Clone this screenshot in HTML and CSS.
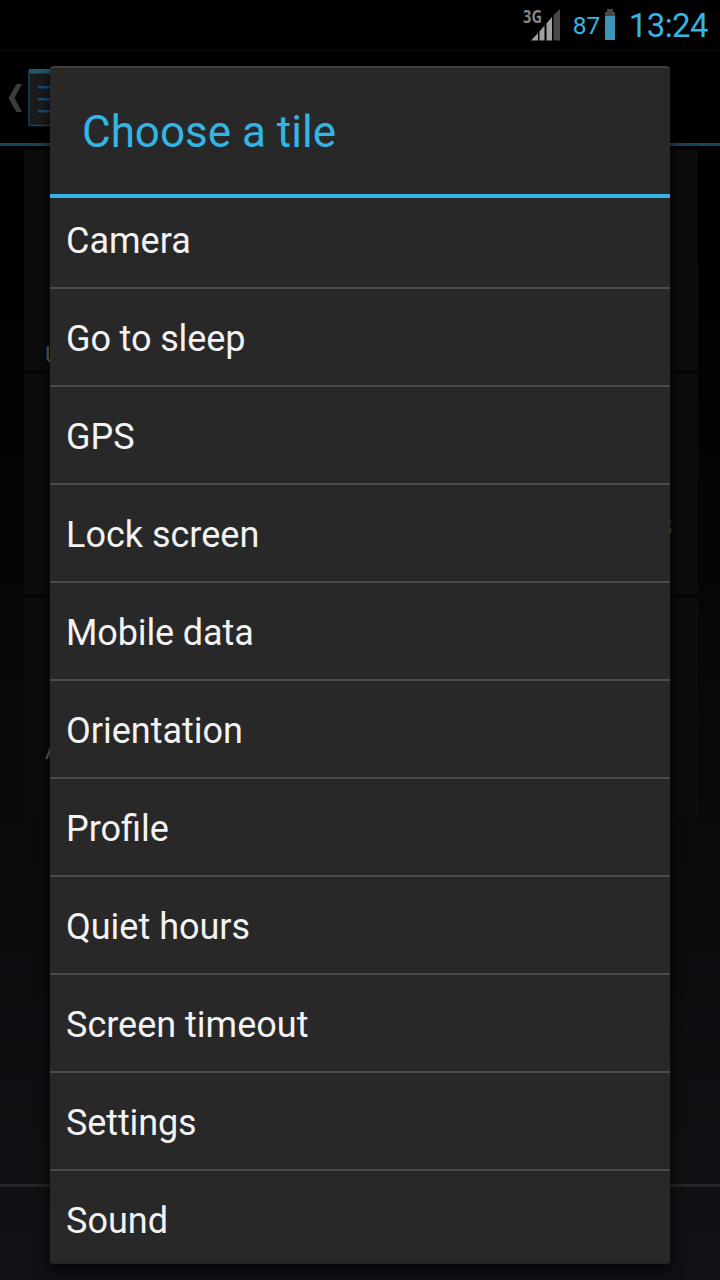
FILE: index.html
```html
<!DOCTYPE html>
<html lang="en">
<head>
<meta charset="utf-8">
<title>Choose a tile</title>
<link rel="stylesheet" href="styles.css">
</head>
<body>
<div class="screen">
  <header class="status">
    <svg class="signal" width="40" height="36" viewBox="0 0 40 36">
      <text x="0" y="17" class="net" textLength="19" lengthAdjust="spacingAndGlyphs">3G</text>
      <path fill="#a0a0a0" d="M8 34.500 15 27V34.500ZM16.500 25.500 21.500 19.500V34.500H16.500ZM23.500 17.500 29 11V34.500H23.500Z"/>
      <path fill="#484848" d="M30.500 9 37 3V34.500H30.500Z"/>
    </svg>
    <span class="percent">87</span>
    <svg class="battery" width="10" height="31" viewBox="0 0 10 31">
      <path fill="#484848" d="M2 0H8V3H10V7H0V3H2Z"/>
      <path fill="#3d94b7" d="M0 7H10V31H0Z"/>
    </svg>
    <span class="clock">13:24</span>
  </header>
  <div class="actionbar">
    <svg class="back" width="14" height="28" viewBox="0 0 14 28"><path fill="#3c3c3c" d="M8.500 0H14L6.500 14 14 28H8.500L.5 14Z"/></svg>
    <svg class="appicon" width="50" height="58" viewBox="0 0 50 58">
      <rect x="1" y="1" width="48" height="55.500" rx="1" fill="#1b1b1b" stroke="#17455f" stroke-width="1.500"/>
      <path fill="#22586e" d="M1 0H49V4H1Z"/>
      <path fill="#353535" d="M2 4H49V5H2Z"/>
      <path fill="#1b4f78" d="M10 17H40V19.500H10ZM10 29H40V31.500H10ZM10 41H40V43.500H10Z"/>
    </svg>
  </div>
  <main class="tiles">
    <div class="tile"><span class="tile-label">U</span></div>
    <div class="tile middle"><span class="tile-label">S</span></div>
    <div class="tile"><span class="tile-label low">A</span></div>
  </main>
  <footer class="bottombar"></footer>
  <section class="dialog">
    <h1 class="title">Choose a tile</h1>
    <ul class="list">
      <li class="item first">Camera</li>
      <li class="item snug">Go to sleep</li>
      <li class="item">GPS</li>
      <li class="item">Lock screen</li>
      <li class="item snug">Mobile data</li>
      <li class="item">Orientation</li>
      <li class="item">Profile</li>
      <li class="item">Quiet hours</li>
      <li class="item">Screen timeout</li>
      <li class="item snug">Settings</li>
      <li class="item last">Sound</li>
    </ul>
  </section>
</div>
</body>
</html>
```
FILE: styles.css
```css
* { box-sizing: border-box; }
body { margin: 0; background: #000; font-family: Roboto, sans-serif; }
.screen {
  position: relative;
  display: flex;
  flex-direction: column;
  width: 720px;
  height: 1280px;
  overflow: hidden;
  background: linear-gradient(#000 0, #000 220px, #040506 560px, #0a0b0d 850px, #0f1013 1180px, #101116 1280px);
}
.status {
  display: flex;
  justify-content: flex-end;
  height: 50px;
  padding-right: 12px;
  background: #000;
  color: #33b5e5;
}
.signal { margin: 6px 10px 0 0; }
.net { font: bold 17px "Open Sans", sans-serif; fill: #858585; }
.percent { width: 32px; font-size: 24.5px; line-height: 52px; letter-spacing: -0.1px; }
.battery { margin: 9px 1px 0 0; }
.clock { margin-left: 13px; font-size: 33px; line-height: 52px; letter-spacing: -0.6px; }
.actionbar {
  display: flex;
  align-items: flex-start;
  height: 96px;
  padding: 18px 0 0 8px;
  border-top: 1px solid #080808;
  border-bottom: 3px solid #164458;
}
.back { margin: 15px 6px 0 0; }
.tiles {
  display: flex;
  flex-direction: column;
  gap: 4px;
  margin: 4px 22px 0 24px;
  background: #050505;
}
.tile {
  display: flex;
  align-items: flex-end;
  height: 220px;
  padding: 0 21px 2px;
  background: #0c0c0c;
}
.middle { align-items: center; justify-content: flex-end; padding: 86px 26px 0 0; background: #0b0d0c; }
.tile-label { color: #666; font-size: 24px; line-height: 26px; }
.low { margin-bottom: 52px; }
.bottombar { height: 96px; margin-top: auto; border-top: 3px solid #242527; }
.dialog {
  position: absolute;
  left: 50px;
  top: 66px;
  width: 620px;
  height: 1198px;
  overflow: hidden;
  border-top: 2px solid #404040;
  border-bottom: 1px solid #1f2122;
  border-radius: 4px;
  background: #282828;
  box-shadow: 0 6px 14px rgba(0, 0, 0, 0.8);
}
.title {
  height: 130px;
  margin: 0;
  padding-left: 32px;
  border-bottom: 4px solid #33b5e5;
  color: #33b5e5;
  font-size: 44px;
  font-weight: 400;
  line-height: 129px;
}
.list { margin: 0; padding: 0; list-style: none; }
.item {
  height: 98px;
  padding-left: 16px;
  border-bottom: 2px solid #4a4a4a;
  color: #f3f3f3;
  font-size: 36px;
  line-height: 100px;
}
.snug { letter-spacing: -0.12px; }
.first { height: 91px; line-height: 86px; }
.last { height: 92px; border-bottom: 0; }
```
